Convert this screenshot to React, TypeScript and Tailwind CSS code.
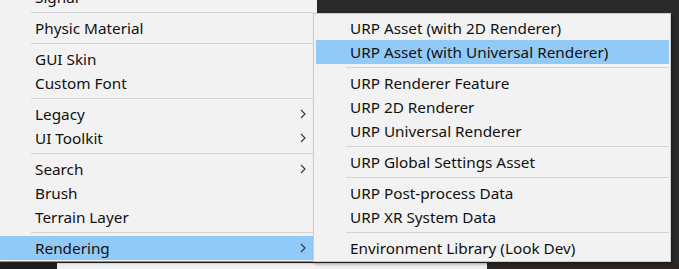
import React from "react";

type Entry = { label?: string; sep?: boolean; arrow?: boolean; active?: boolean };

const leftItems: Entry[] = [
  { label: "Signal" },
  { sep: true },
  { label: "Physic Material" },
  { sep: true },
  { label: "GUI Skin" },
  { label: "Custom Font" },
  { sep: true },
  { label: "Legacy", arrow: true },
  { label: "UI Toolkit", arrow: true },
  { sep: true },
  { label: "Search", arrow: true },
  { label: "Brush" },
  { label: "Terrain Layer" },
  { sep: true },
  { label: "Rendering", arrow: true, active: true },
];

const rightItems: Entry[] = [
  { label: "URP Asset (with 2D Renderer)" },
  { label: "URP Asset (with Universal Renderer)", active: true },
  { sep: true },
  { label: "URP Renderer Feature" },
  { label: "URP 2D Renderer" },
  { label: "URP Universal Renderer" },
  { sep: true },
  { label: "URP Global Settings Asset" },
  { sep: true },
  { label: "URP Post-process Data" },
  { label: "URP XR System Data" },
  { sep: true },
  { label: "Environment Library (Look Dev)" },
];

function Chevron() {
  return (
    <svg width="6" height="10" viewBox="0 0 6 10" className="shrink-0">
      <path d="M1 1 L5 5 L1 9" fill="none" stroke="#333" strokeWidth="1.1" />
    </svg>
  );
}

const font = { fontFamily: '"Noto Sans", "Open Sans", sans-serif' };

export default function App() {
  return (
    <div
      className="relative w-[679px] h-[269px] overflow-hidden bg-[#2a2a2a] flex flex-col"
      style={font}
    >
      <div className="flex-1" />
      <div className="flex h-[6px]">
        <div className="w-[57px] bg-[#1c1c1c]" />
        <div className="w-[430px] bg-[#efefef]" />
        <div className="flex-1 bg-[#2b2621]" />
      </div>

      {/* left menu */}
      <div className="absolute left-0 top-[-15px] w-[317px] bg-[#f2f2f2] border-b border-[#8a8a8a] pb-[1px] flex flex-col shadow-[0_1px_2px_rgba(0,0,0,0.35)]">
        {leftItems.map((it, i) =>
          it.sep ? (
            <div key={i} className="h-[7px] flex items-center pl-[31px] pr-[4px]">
              <div className="h-px w-full bg-[#d4d4d4]" />
            </div>
          ) : (
            <div
              key={i}
              className={
                "h-[24px] flex items-center justify-between pl-[35px] pr-[11px] text-[15.3px] text-[#111] " +
                (it.active ? "bg-[#91c9f7]" : "")
              }
            >
              <span className="leading-[24px]">{it.label}</span>
              {it.arrow ? <Chevron /> : null}
            </div>
          )
        )}
      </div>

      {/* submenu */}
      <div className="absolute left-[313px] top-[13px] w-[358px] bg-[#f2f2f2] border border-[#cccccc] pt-[2px] pb-[1px] pl-[2px] pr-[1px] flex flex-col shadow-[2px_2px_3px_rgba(0,0,0,0.35)]">
        {rightItems.map((it, i) =>
          it.sep ? (
            <div key={i} className="h-[7px] flex items-center pl-[30px]">
              <div className="h-px w-full bg-[#d4d4d4]" />
            </div>
          ) : (
            <div
              key={i}
              className={
                "h-[24px] flex items-center pl-[34px] text-[15.3px] text-[#111] " +
                (it.active ? "bg-[#91c9f7]" : "")
              }
            >
              <span className="leading-[24px]">{it.label}</span>
            </div>
          )
        )}
      </div>
    </div>
  );
}
